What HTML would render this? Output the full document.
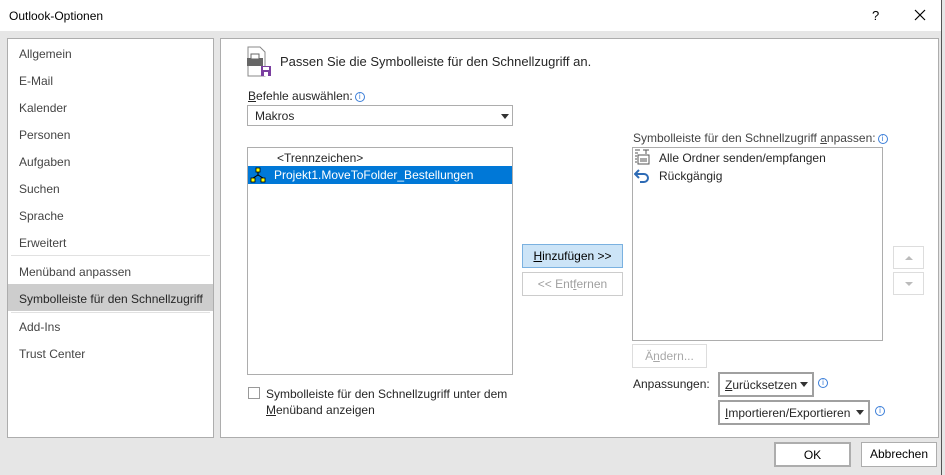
<!DOCTYPE html>
<html><head><meta charset="utf-8"><style>
*{margin:0;padding:0;box-sizing:border-box}
body{width:945px;height:475px;background:#e6e6e6;font-family:"Liberation Sans",sans-serif;font-size:12px;color:#262626;position:relative;overflow:hidden}
.a{position:absolute;white-space:nowrap}
.title{left:0;top:0;width:942px;height:31px;background:#fff}
.win{left:941px;top:0;width:1px;height:475px;background:#555}
.nav{left:7px;top:38px;width:207px;height:400px;background:#fff;border:1px solid #adadad}
.ni{position:absolute;left:11px;color:#444;font-size:12px}
.main{left:220px;top:38px;width:719px;height:400px;background:#fff;border:1px solid #adadad}
.box{border:1px solid #adadad;background:#fff}
.btn{border:1px solid #ccc;background:#fff;text-align:center;line-height:22px}
u{text-decoration:underline}
.info{display:inline-block;width:10px;height:10px;border:1px solid #3b7ed8;border-radius:50%;color:#3b7ed8;font-size:8px;line-height:8px;text-align:center;vertical-align:1px;margin-left:2px}
.dd{position:absolute;border-left:4px solid transparent;border-right:4px solid transparent;border-top:5px solid #333}
</style></head><body>
<div class="a title"></div>
<div class="a" style="left:9px;top:9px;font-size:12px;color:#000">Outlook-Optionen</div>
<div class="a" style="left:872px;top:8px;font-size:13px;color:#000">?</div>
<svg class="a" style="left:914px;top:9px" width="12" height="12"><path d="M1 1L11 11M11 1L1 11" stroke="#000" stroke-width="1.2"/></svg>
<div class="a win"></div>

<div class="a nav">
<div class="ni" style="top:8px">Allgemein</div>
<div class="ni" style="top:35px">E-Mail</div>
<div class="ni" style="top:62px">Kalender</div>
<div class="ni" style="top:89px">Personen</div>
<div class="ni" style="top:116px">Aufgaben</div>
<div class="ni" style="top:143px">Suchen</div>
<div class="ni" style="top:170px">Sprache</div>
<div class="ni" style="top:197px">Erweitert</div>
<div style="position:absolute;left:3px;top:216px;width:199px;height:1px;background:#e1e1e1"></div>
<div class="ni" style="top:226px">Menüband anpassen</div>
<div style="position:absolute;left:0;top:245px;width:205px;height:27px;background:#cdcdcd"></div>
<div class="ni" style="top:253px;color:#262626">Symbolleiste für den Schnellzugriff</div>
<div style="position:absolute;left:3px;top:273px;width:199px;height:1px;background:#e1e1e1"></div>
<div class="ni" style="top:281px">Add-Ins</div>
<div class="ni" style="top:308px">Trust Center</div>
</div>

<div class="a main"></div>
<svg class="a" style="left:246px;top:46px" width="30" height="32">
<path d="M2 1h12l5 5v24H2z" fill="#fff" stroke="#888"/>
<rect x="1" y="12" width="16" height="8" fill="#666"/>
<rect x="5" y="8" width="8" height="5" fill="#fff" stroke="#666"/>
<rect x="15" y="20" width="10" height="10" fill="#7b3fa0"/>
<rect x="17" y="21" width="6" height="3" fill="#fff"/>
<rect x="18" y="26" width="4" height="4" fill="#fff"/>
</svg>
<div class="a" style="left:280px;top:54px;font-size:13px;color:#262626">Passen Sie die Symbolleiste für den Schnellzugriff an.</div>
<div class="a" style="left:248px;top:89px"><u>B</u>efehle auswählen:<span class="info">i</span></div>
<div class="a box" style="left:247px;top:105px;width:266px;height:21px"><span style="position:absolute;left:7px;top:3px">Makros</span><div class="dd" style="left:253px;top:8px"></div></div>

<div class="a box" style="left:247px;top:147px;width:266px;height:228px">
<div style="position:absolute;left:29px;top:3px">&lt;Trennzeichen&gt;</div>
<div style="position:absolute;left:0;top:18px;width:264px;height:18px;background:#0078d7;color:#fff"><span style="position:absolute;left:26px;top:2px">Projekt1.MoveToFolder_Bestellungen</span>
<svg style="position:absolute;left:2px;top:1px" width="16" height="16"><rect x="6" y="1" width="4" height="4" fill="#ff0" stroke="#000" stroke-width=".8"/><rect x="1" y="11" width="4" height="4" fill="#ff0" stroke="#000" stroke-width=".8"/><rect x="11" y="11" width="4" height="4" fill="#ff0" stroke="#000" stroke-width=".8"/><path d="M8 5v3M3 11L8 8L13 11" stroke="#000" fill="none"/></svg></div>
</div>

<div class="a" style="left:248px;top:387px;width:12px;height:12px;border:1px solid #999;background:#fff"></div>
<div class="a" style="left:266px;top:386px;line-height:16px">Symbolleiste für den Schnellzugriff unter dem<br><u>M</u>enüband anzeigen</div>

<div class="a btn" style="left:522px;top:244px;width:101px;height:24px;background:#cce4f7;border-color:#7ab1e0;color:#000"><u>H</u>inzufügen &gt;&gt;</div>
<div class="a btn" style="left:522px;top:272px;width:101px;height:24px;color:#a0a0a0">&lt;&lt; Ent<u>f</u>ernen</div>

<div class="a" style="left:633px;top:131px;color:#444">Symbolleiste für den Schnellzugriff <u>a</u>npassen:<span class="info">i</span></div>
<div class="a box" style="left:632px;top:147px;width:251px;height:194px">
<svg style="position:absolute;left:1px;top:1px" width="16" height="16"><rect x="4" y="6" width="11" height="9" fill="#fff" stroke="#555"/><path d="M1 1h5M1 4h3M1 7h2M1 10h2M1 13h2M9 1h6M12 1v4M6 10h7M6 12h7" stroke="#555"/></svg>
<div style="position:absolute;left:26px;top:3px">Alle Ordner senden/empfangen</div>
<svg style="position:absolute;left:1px;top:19px" width="16" height="16"><path d="M5 3L1 7L5 11M1 7h9a4 4 0 0 1 0 8H6" fill="none" stroke="#2e6bb5" stroke-width="2"/></svg>
<div style="position:absolute;left:26px;top:21px">Rückgängig</div>
</div>
<div class="a btn" style="left:632px;top:344px;width:75px;height:24px;color:#a8a8a8;border-color:#ddd">Ä<u>n</u>dern...</div>
<div class="a" style="left:633px;top:377px">Anpassungen:</div>
<div class="a" style="left:718px;top:372px;width:96px;height:25px;border:2px solid #a0a0a0;background:#fff"><span style="position:absolute;left:5px;top:4px"><u>Z</u>urücksetzen</span><div class="dd" style="left:80px;top:8px"></div></div>
<span class="a info" style="left:816px;top:378px">i</span>
<div class="a" style="left:718px;top:400px;width:152px;height:25px;border:2px solid #a0a0a0;background:#fff"><span style="position:absolute;left:5px;top:4px"><u>I</u>mportieren/Exportieren</span><div class="dd" style="left:136px;top:8px"></div></div>
<span class="a info" style="left:873px;top:406px">i</span>

<div class="a btn" style="left:893px;top:246px;width:31px;height:23px;border-color:#ddd"></div>
<div class="a" style="left:905px;top:256px;border-left:4px solid transparent;border-right:4px solid transparent;border-bottom:4px solid #bbb"></div>
<div class="a btn" style="left:893px;top:272px;width:31px;height:23px;border-color:#ddd"></div>
<div class="a" style="left:905px;top:282px;border-left:4px solid transparent;border-right:4px solid transparent;border-top:4px solid #bbb"></div>

<div class="a btn" style="left:774px;top:442px;width:77px;height:25px;border:2px solid #adadad;color:#000">OK</div>
<div class="a btn" style="left:861px;top:442px;width:76px;height:25px;border-color:#adadad;color:#000">Abbrechen</div>
</body></html>
